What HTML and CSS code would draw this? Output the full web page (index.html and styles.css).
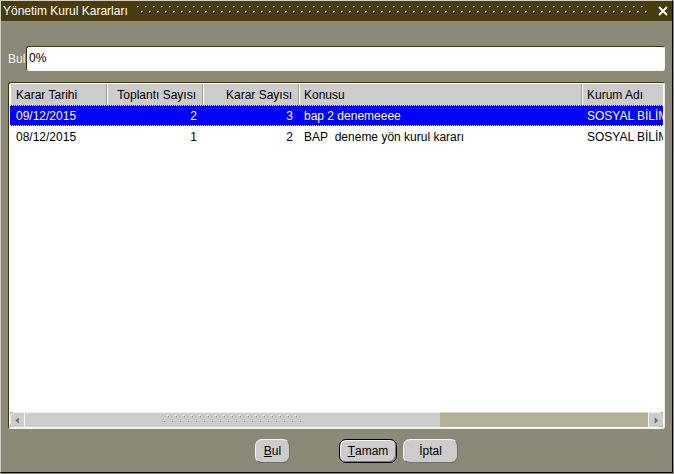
FILE: index.html
```html
<!DOCTYPE html>
<html lang="tr">
<head>
<meta charset="utf-8">
<title>Yönetim Kurul Kararları</title>
<link rel="stylesheet" href="styles.css">
</head>
<body>
<div class="window">
  <div class="titlebar">
    <span class="title">Yönetim Kurul Kararları</span>
    <svg class="grip" xmlns="http://www.w3.org/2000/svg">
      <defs>
        <pattern id="gripdots" width="8" height="20" patternUnits="userSpaceOnUse">
          <rect x="0" y="5" width="1" height="1" fill="#f2ead0"/>
          <rect x="1" y="5" width="1" height="1" fill="#9c9068"/>
          <rect x="0" y="6" width="1" height="1" fill="#9c9068"/>
          <rect x="1" y="6" width="1" height="1" fill="#000"/>
          <rect x="4" y="10" width="1" height="1" fill="#f2ead0"/>
          <rect x="5" y="10" width="1" height="1" fill="#9c9068"/>
          <rect x="4" y="11" width="1" height="1" fill="#9c9068"/>
          <rect x="5" y="11" width="1" height="1" fill="#000"/>
        </pattern>
      </defs>
      <rect width="100%" height="100%" fill="url(#gripdots)"/>
    </svg>
    <svg class="close" viewBox="0 0 10 10" xmlns="http://www.w3.org/2000/svg">
      <path d="M1 1 L9 9 M9 1 L1 9" stroke="#fff" stroke-width="1.8" fill="none"/>
    </svg>
  </div>

  <div class="content">
    <div class="search">
      <span class="label">Bul</span>
      <div class="field">0%</div>
    </div>

    <div class="frame">
      <div class="grid-row thead">
        <div class="c">Karar Tarihi</div>
        <div class="c r">Toplantı Sayısı</div>
        <div class="c r">Karar Sayısı</div>
        <div class="c c4">Konusu</div>
        <div class="c c5">Kurum Adı</div>
      </div>
      <div class="grid-row row sel">
        <div class="c">09/12/2015</div>
        <div class="c r">2</div>
        <div class="c r">3</div>
        <div class="c c4">bap 2 denemeeee</div>
        <div class="c c5"><span class="clip">SOSYAL BİLİM</span></div>
      </div>
      <div class="grid-row row">
        <div class="c">08/12/2015</div>
        <div class="c r">1</div>
        <div class="c r">2</div>
        <div class="c c4">BAP&nbsp; deneme yön kurul kararı</div>
        <div class="c c5"><span class="clip">SOSYAL BİLİM</span></div>
      </div>
      <div class="fill"></div>
      <div class="hscroll">
        <div class="sbtn left">
          <svg width="15" height="15" viewBox="0 0 15 15" xmlns="http://www.w3.org/2000/svg"><path d="M9 4 L5 7.5 L9 11 Z" fill="#707070"/></svg>
        </div>
        <div class="thumb">
          <svg width="140" height="15" xmlns="http://www.w3.org/2000/svg">
            <defs>
              <pattern id="thumbdots" width="8" height="15" patternUnits="userSpaceOnUse">
                <rect x="4" y="3" width="1" height="1" fill="#ffffff"/>
                <rect x="5" y="4" width="1" height="1" fill="#8a8a8a"/>
                <rect x="0" y="8" width="1" height="1" fill="#ffffff"/>
                <rect x="1" y="9" width="1" height="1" fill="#8a8a8a"/>
              </pattern>
            </defs>
            <rect width="140" height="15" fill="url(#thumbdots)"/>
          </svg>
        </div>
        <div class="track"></div>
        <div class="sbtn right">
          <svg width="15" height="15" viewBox="0 0 15 15" xmlns="http://www.w3.org/2000/svg"><path d="M6 4 L10 7.5 L6 11 Z" fill="#707070"/></svg>
        </div>
      </div>
    </div>

    <div class="buttons">
      <div class="btn b-find"><u>B</u>ul</div>
      <div class="btn b-ok"><u>T</u>amam</div>
      <div class="btn b-cancel">İptal</div>
    </div>
  </div>
</div>
</body>
</html>
```

FILE: styles.css
```css
html, body {
  margin: 0;
  padding: 0;
}

body {
  width: 674px;
  height: 474px;
  overflow: hidden;
  background: #8b8a78;
  font-family: "Liberation Sans", Arial, sans-serif;
  font-size: 12px;
  color: #000;
}

.window {
  box-sizing: border-box;
  width: 673px;
  height: 473px;
  border-style: solid;
  border-width: 1px;
  border-color: #d2d0c4 #000 #000 #d2d0c4;
  background: #8b8a78;
  display: flex;
  flex-direction: column;
}

/* ---------- title bar ---------- */
.titlebar {
  flex: none;
  height: 20px;
  background: #483c0d;
  display: flex;
  align-items: center;
  color: #fff;
}

.title {
  padding-left: 2px;
  line-height: 20px;
  white-space: nowrap;
}

.grip {
  flex: 1 1 auto;
  min-width: 0;
  height: 20px;
  margin-left: 9px;
  margin-right: 11px;
  display: block;
}

.close {
  flex: none;
  width: 10px;
  height: 10px;
  margin-right: 4px;
  display: block;
}

/* ---------- content ---------- */
.content {
  flex: 1 1 auto;
  display: flex;
  flex-direction: column;
  padding: 0 7px;
}

.search {
  display: flex;
  align-items: center;
  margin-top: 25px;
  height: 25px;
}

.label {
  width: 18px;
  color: #f4f4f0;
  white-space: nowrap;
}

.field {
  flex: 1 1 auto;
  box-sizing: border-box;
  height: 25px;
  background: #fff;
  border: 1px solid;
  border-color: #3f350c #f4f3ec #f4f3ec #3f350c;
  border-radius: 3px;
  padding-left: 2px;
  line-height: 23px;
}

/* ---------- table frame ---------- */
.frame {
  margin-top: 11px;
  height: 347px;
  box-sizing: border-box;
  border: 1px solid;
  border-color: #3f350c #eeede4 #eeede4 #3f350c;
  border-radius: 3px;
  padding: 1px;
  background: #fff;
  display: flex;
  flex-direction: column;
  overflow: hidden;
}

.grid-row {
  display: grid;
  grid-template-columns: 97px 96px 96px 283px 1fr;
  flex: none;
}

.c {
  box-sizing: border-box;
  padding: 1px 6px 0 6px;
  white-space: nowrap;
  overflow: hidden;
}

.c.r {
  text-align: right;
}

.c.c4,
.c.c5 {
  padding-left: 5px;
}

.c.c5 {
  padding-right: 0;
}

.clip {
  display: block;
  overflow: hidden;
  white-space: nowrap;
}

.thead {
  height: 21px;
  background: #cccccc;
}

.thead .c {
  line-height: 20px;
  border-right: 1px solid #9c9c9c;
  box-shadow: inset 1px 0 #ffffff;
}

.thead .c5 {
  border-right: none;
}

.row {
  height: 21px;
  line-height: 20px;
}

.row.sel {
  color: #fff;
  background:
    repeating-linear-gradient(90deg, #ffffff 0 1px, transparent 1px 2px) top / 100% 1px no-repeat,
    repeating-linear-gradient(90deg, #ffffff 0 1px, transparent 1px 2px) bottom / 100% 1px no-repeat,
    #0000ff;
}

.fill {
  flex: 1 1 auto;
  background: #fff;
}

/* ---------- horizontal scrollbar ---------- */
.hscroll {
  flex: none;
  height: 15px;
  display: flex;
  background: #b3b198;
}

.sbtn {
  flex: none;
  width: 15px;
  height: 15px;
  box-sizing: border-box;
  background: #cccccc;
  display: flex;
  align-items: center;
  justify-content: center;
}

.sbtn svg {
  display: block;
}

.sbtn.left {
  border-radius: 5px 0 0 5px;
  border-left: 1px solid #f0f0f0;
  border-top: 1px solid #f0f0f0;
  border-right: 1px solid #f4f4f4;
}

.sbtn.right {
  border-radius: 0 5px 5px 0;
  border-top: 1px solid #f0f0f0;
  border-left: 1px solid #f4f4f4;
}

.thumb {
  flex: none;
  width: 415px;
  height: 15px;
  box-sizing: border-box;
  background: #cccccc;
  border-top: 1px solid #f0f0f0;
  display: flex;
  justify-content: center;
  align-items: flex-start;
}

.thumb svg {
  display: block;
  margin-top: -1px;
}

.track {
  flex: 1 1 auto;
  background: #b3b198;
  border-top: 1px solid #d8d6c4;
}

/* ---------- buttons ---------- */
.buttons {
  display: flex;
  margin-top: 10px;
  padding-left: 247px;
}

.btn {
  box-sizing: border-box;
  height: 24px;
  background: #cccccc;
  border: 1px solid;
  border-color: #f4f4f4 #6e6e6e #6e6e6e #f4f4f4;
  border-radius: 7px;
  display: flex;
  align-items: center;
  justify-content: center;
  white-space: nowrap;
}

.b-find {
  width: 35px;
}

.b-ok {
  width: 58px;
  margin-left: 49px;
  border-color: #000;
  box-shadow: inset 1px 1px #f4f4f4, inset -1px -1px #7a7a7a;
}

.b-cancel {
  width: 55px;
  margin-left: 6px;
}
```
